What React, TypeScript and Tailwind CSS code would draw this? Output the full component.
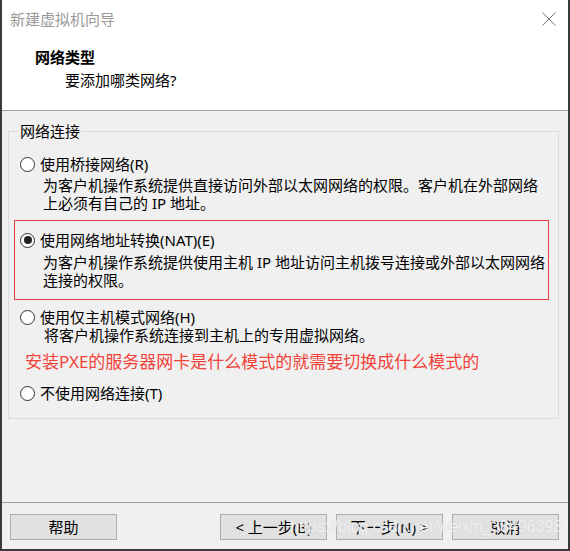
import React from "react";

function Radio({ checked }: { checked?: boolean }) {
  return (
    <span className="flex h-[15px] w-[15px] shrink-0 items-center justify-center rounded-full border border-[#333] bg-white">
      {checked && <span className="h-[8px] w-[8px] rounded-full bg-[#222]" />}
    </span>
  );
}

function Btn({ label }: { label: string }) {
  return (
    <button className="flex h-[26px] w-[107px] items-center justify-center border border-[#adadad] bg-[#e1e1e1] text-[15px] leading-[18px] text-black">
      {label}
    </button>
  );
}

export default function App() {
  return (
    <div className="relative flex h-[551px] w-[570px] flex-col border-x-2 border-b-2 border-[#3a3a3a] bg-white font-['Noto_Sans','Noto_Sans_CJK_SC',sans-serif] text-[15px] leading-[18px] text-black">
      {/* title bar */}
      <div className="flex h-[38px] items-center justify-between pl-[8px] pr-[12px]">
        <span className="text-[15px] text-[#9a9a9a]">新建虚拟机向导</span>
        <svg width="14" height="14" viewBox="0 0 14 14">
          <path d="M0.5 0.5 L13.5 13.5 M13.5 0.5 L0.5 13.5" stroke="#7a7a7a" strokeWidth="1" />
        </svg>
      </div>

      {/* header */}
      <div className="h-[73px] border-b border-[#a0a0a0] pt-[10px]">
        <div className="pl-[33px] font-bold">网络类型</div>
        <div className="mt-[5px] pl-[63px]">要添加哪类网络?</div>
      </div>

      {/* body */}
      <div className="h-[391px] bg-[#f0f0f0] pt-[20px] pl-[6px] pr-[9px]">
        <div className="relative h-[288px] border border-[#dcdcdc]">
          <span className="absolute -top-[10px] left-[10px] bg-[#f0f0f0] px-[1px]">网络连接</span>

          <div className="ml-[11px] mt-[23px]">
            <div className="flex items-center gap-[5px]">
              <Radio />
              <span>使用桥接网络(R)</span>
            </div>
            <div className="mt-[3px] whitespace-nowrap pl-[23px]">
              为客户机操作系统提供直接访问外部以太网网络的权限。客户机在外部网络
              <br />
              上必须有自己的 IP 地址。
            </div>
          </div>

          <div className="ml-[5px] mr-[9px] mt-[8px] border border-[#e83c3c] pb-[10px] pl-[5px] pt-[10px]">
            <div className="flex items-center gap-[5px]">
              <Radio checked />
              <span>使用网络地址转换(NAT)(E)</span>
            </div>
            <div className="mt-[4px] whitespace-nowrap pl-[23px]">
              为客户机操作系统提供使用主机 IP 地址访问主机拨号连接或外部以太网网络
              <br />
              连接的权限。
            </div>
          </div>

          <div className="ml-[11px] mt-[8px]">
            <div className="flex items-center gap-[5px]">
              <Radio />
              <span>使用仅主机模式网络(H)</span>
            </div>
            <div className="whitespace-nowrap pl-[24px]">将客户机操作系统连接到主机上的专用虚拟网络。</div>
          </div>

          <div className="ml-[16px] mt-[7px] whitespace-nowrap text-[17px] leading-[22px] text-[#f0433a]">
            安装PXE的服务器网卡是什么模式的就需要切换成什么模式的
          </div>

          <div className="ml-[11px] mt-[11px] flex items-center gap-[5px]">
            <Radio />
            <span>不使用网络连接(T)</span>
          </div>
        </div>
      </div>

      {/* footer */}
      <div className="flex flex-1 items-start border-t border-[#a0a0a0] bg-[#f0f0f0] pl-[8px] pr-[9px] pt-[11px]">
        <Btn label="帮助" />
        <div className="ml-auto flex gap-[9px]">
          <Btn label="< 上一步(B)" />
          <Btn label="下一步(N) >" />
          <Btn label="取消" />
        </div>
      </div>

      {/* watermark */}
      <span className="pointer-events-none absolute left-[288px] top-[517px] whitespace-nowrap font-['Liberation_Sans',sans-serif] text-[16px] leading-[20px] text-white/75 [text-shadow:0_0_1px_#c4c4c4]">
        https://blog.csdn.net/weixin_38496398
      </span>
    </div>
  );
}
